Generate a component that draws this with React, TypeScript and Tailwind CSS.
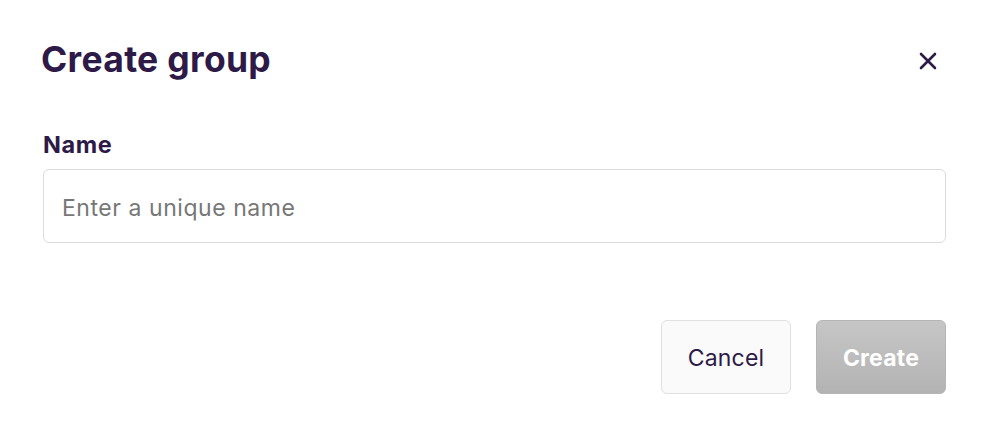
export default function App() {
  return (
    <div className="h-[438px] w-[984px] bg-white font-['Inter','Noto_Sans',sans-serif] text-[#2e1a47]">
      <div className="pl-[43px] pr-[38px] pt-[36px]">
        <div className="flex items-center justify-between">
          <h1 className="-ml-[2px] text-[35.5px] font-bold leading-[48px] tracking-[0.3px]">Create group</h1>
          <button className="mr-[6px] mt-[2px] flex h-[24px] w-[24px] items-center justify-center">
            <svg width="20" height="20" viewBox="0 0 20 20" fill="none" stroke="#2e1a47" strokeWidth="2.6" strokeLinecap="round">
              <path d="M3 3 L17 17 M17 3 L3 17" />
            </svg>
          </button>
        </div>

        <label className="mt-[47px] block text-[23.5px] font-bold leading-[28px] tracking-[0.6px]">Name</label>
        <input
          className="mt-[10px] block h-[74px] w-[903px] rounded-[6px] border border-[#dcdcdc] px-[18px] pt-[3px] text-[23px] tracking-[0.55px] text-[#2e1a47] outline-none placeholder:text-[#777777]"
          placeholder="Enter a unique name"
        />

        <div className="mt-[77px] flex w-[903px] justify-end gap-[25px]">
          <button className="h-[74px] w-[130px] rounded-[6px] border border-[#e0e0e0] bg-[#fafafa] pt-[2px] text-[23px] tracking-[0.2px] text-[#2e1a47]">
            Cancel
          </button>
          <button className="h-[74px] w-[130px] rounded-[6px] border border-[#b5b5b5] bg-gradient-to-b from-[#c6c6c6] to-[#b3b3b3] pt-[2px] text-[23px] font-bold tracking-[0.2px] text-white">
            Create
          </button>
        </div>
      </div>
    </div>
  );
}
